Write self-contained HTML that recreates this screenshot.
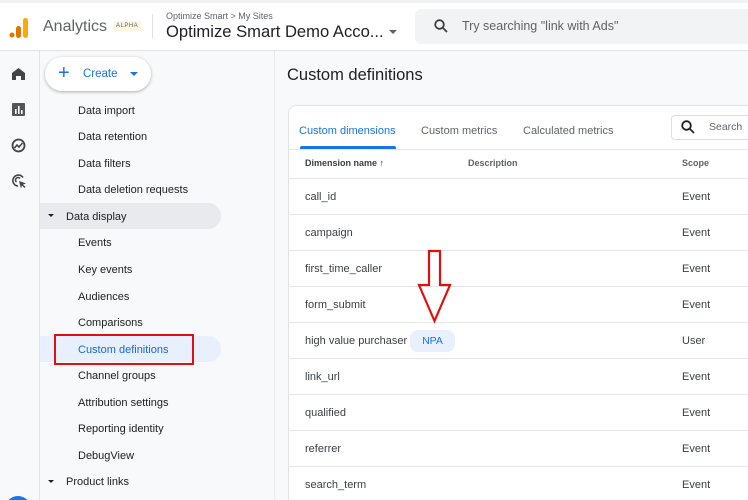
<!DOCTYPE html>
<html><head><style>
*{margin:0;padding:0;box-sizing:border-box}
html,body{width:748px;height:500px;overflow:hidden}
body{background:#f8f9fa;font-family:"Liberation Sans",Arial,sans-serif;position:relative;color:#202124}
.a{position:absolute}
.hdr{left:0;top:0;width:748px;height:51px;background:#fff;border-bottom:1px solid #e3e3e3;border-top:3px solid #f1f1f1}
.rail{left:0;top:51px;width:40px;height:449px;background:#f8f9fa;border-right:1px solid #e3e3e3}
.side{left:40px;top:51px;width:235px;height:449px;background:#f8f9fa;border-right:1px solid #e8e8e8}
.it{position:absolute;left:78px;font-size:11px;color:#202124;line-height:14px}
.card{left:288px;top:105px;width:470px;height:420px;background:#fff;border:1px solid #e3e3e3;border-radius:8px}
.row{position:absolute;left:288px;width:460px;border-top:1px solid #e6e6e6}
.cell{position:absolute;font-size:11px;color:#3c4043}
</style></head><body>
<div class="a hdr"></div>
<svg class="a" style="left:9px;top:17px" width="22" height="22"><circle cx="3" cy="18" r="2.5" fill="#e37400"/><rect x="7" y="9" width="5" height="12" rx="2.5" fill="#e37400"/><rect x="14" y="1" width="5" height="20" rx="2.5" fill="#f9ab00"/></svg>
<div class="a" style="left:43px;top:18px;font-size:16px;color:#5f6368">Analytics</div>
<div class="a" style="left:113px;top:21px;font-size:6px;background:#fef7e0;color:#5f6368;padding:2px 3px;letter-spacing:.5px">ALPHA</div>
<div class="a" style="left:152px;top:14px;width:1px;height:24px;background:#e0e0e0"></div>
<div class="a" style="left:166px;top:11px;font-size:9px;color:#5f6368">Optimize Smart &gt; My Sites</div>
<div class="a" style="left:166px;top:22px;font-size:16.6px;color:#202124">Optimize Smart Demo Acco...</div>
<div class="a" style="left:389px;top:30px;width:0;height:0;border-left:4px solid transparent;border-right:4px solid transparent;border-top:4px solid #5f6368"></div>
<div class="a" style="left:415px;top:9px;width:340px;height:35px;background:#f1f3f4;border-radius:6px"></div>
<svg class="a" style="left:434px;top:19px" width="14" height="14"><circle cx="5.5" cy="5.5" r="4.3" fill="none" stroke="#3c4043" stroke-width="1.8"/><line x1="8.5" y1="8.5" x2="13" y2="13" stroke="#3c4043" stroke-width="1.8"/></svg>
<div class="a" style="left:462px;top:19px;font-size:12.5px;color:#5f6368">Try searching "link with Ads"</div>
<div class="a rail"></div>
<svg class="a" style="left:11px;top:67px" width="15" height="14"><path d="M1 6 L7.5 1 L14 6 V13 H10 V9 H5 V13 H1Z" fill="#444"/></svg>
<svg class="a" style="left:12px;top:103px" width="13" height="13"><rect width="13" height="13" rx="1" fill="#555"/><rect x="3" y="6" width="1.6" height="5" fill="#fff"/><rect x="6" y="3" width="1.6" height="8" fill="#fff"/><rect x="9" y="7" width="1.6" height="4" fill="#fff"/></svg>
<svg class="a" style="left:11px;top:138px" width="15" height="15"><circle cx="7.5" cy="7.5" r="6" fill="none" stroke="#444" stroke-width="1.8"/><path d="M3.5 10 L6 7 L8 9 L11.5 5" fill="none" stroke="#444" stroke-width="1.6"/></svg>
<svg class="a" style="left:11px;top:173px" width="16" height="16"><path d="M12 4.5 A5.5 5.5 0 1 0 7 13" fill="none" stroke="#444" stroke-width="1.6"/><path d="M9 5.5 A2.5 2.5 0 1 0 5.5 9" fill="none" stroke="#444" stroke-width="1.5"/><path d="M8 8 L15 10.5 L12 11.5 L14.5 14 L13.5 15 L11 12.5 L10 15.5Z" fill="#444"/></svg>
<div class="a" style="left:5px;top:496px;width:26px;height:26px;border-radius:50%;background:#1a73e8"></div>
<div class="a side"></div>
<div class="a" style="left:45px;top:57px;width:106px;height:34px;background:#fff;border-radius:17px;box-shadow:0 1px 3px rgba(0,0,0,.3)"></div>
<div class="a" style="left:58px;top:63px;font-size:20px;color:#1a73e8;line-height:20px">+</div>
<div class="a" style="left:83px;top:68px;font-size:11.5px;color:#1a73e8">Create</div>
<div class="a" style="left:130px;top:72px;border-left:4px solid transparent;border-right:4px solid transparent;border-top:4px solid #1a73e8"></div>
<div class="a" style="left:40px;top:203px;width:181px;height:26px;background:#e8eaed;border-radius:0 13px 13px 0"></div>
<div class="a" style="left:40px;top:336px;width:181px;height:26px;background:#e8f0fe;border-radius:0 13px 13px 0"></div>
<div class="a" style="left:54px;top:334px;width:140px;height:31px;border:2px solid #e01010"></div>
<div class="it" style="top:104px">Data import</div>
<div class="it" style="top:130px">Data retention</div>
<div class="it" style="top:157px">Data filters</div>
<div class="it" style="top:183px">Data deletion requests</div>
<div class="a" style="left:48px;top:214px;border-left:3px solid transparent;border-right:3px solid transparent;border-top:3px solid #202124"></div>
<div class="it" style="top:210px;left:66px">Data display</div>
<div class="it" style="top:236px">Events</div>
<div class="it" style="top:263px">Key events</div>
<div class="it" style="top:290px">Audiences</div>
<div class="it" style="top:316px">Comparisons</div>
<div class="it" style="top:343px;color:#1967d2">Custom definitions</div>
<div class="it" style="top:369px">Channel groups</div>
<div class="it" style="top:396px">Attribution settings</div>
<div class="it" style="top:422px">Reporting identity</div>
<div class="it" style="top:449px">DebugView</div>
<div class="a" style="left:48px;top:480px;border-left:3px solid transparent;border-right:3px solid transparent;border-top:3px solid #202124"></div>
<div class="it" style="top:475px;left:66px">Product links</div>
<div class="a" style="left:287px;top:66px;font-size:16.5px;color:#202124">Custom definitions</div>
<div class="a card"></div>
<div class="a" style="left:299px;top:125px;font-size:11px;color:#1a73e8">Custom dimensions</div>
<div class="a" style="left:300px;top:146px;width:96px;height:3px;background:#1a73e8;border-radius:2px 2px 0 0"></div>
<div class="a" style="left:421px;top:125px;font-size:11px;color:#5f6368">Custom metrics</div>
<div class="a" style="left:523px;top:125px;font-size:11px;color:#5f6368">Calculated metrics</div>
<div class="a" style="left:671px;top:115px;width:90px;height:25px;border:1px solid #dadce0;border-radius:4px;background:#fff"></div>
<svg class="a" style="left:681px;top:120px" width="14" height="14"><circle cx="5.5" cy="5.5" r="4.3" fill="none" stroke="#202124" stroke-width="1.8"/><line x1="8.5" y1="8.5" x2="13" y2="13" stroke="#202124" stroke-width="1.8"/></svg>
<div class="a" style="left:709px;top:121px;font-size:10.5px;color:#5f6368">Search</div>
<div class="row" style="top:149px"></div>
<div class="cell" style="left:305px;top:158px;font-size:9px;font-weight:bold;color:#3c4043">Dimension name ↑</div>
<div class="cell" style="left:468px;top:158px;font-size:9px;font-weight:bold;color:#5f6368">Description</div>
<div class="cell" style="left:682px;top:158px;font-size:9px;font-weight:bold;color:#5f6368">Scope</div>
<div class="row" style="top:178px"></div><div class="cell" style="left:305px;top:191px">call_id</div><div class="cell" style="left:682px;top:191px">Event</div>
<div class="row" style="top:214px"></div><div class="cell" style="left:305px;top:227px">campaign</div><div class="cell" style="left:682px;top:227px">Event</div>
<div class="row" style="top:250px"></div><div class="cell" style="left:305px;top:263px">first_time_caller</div><div class="cell" style="left:682px;top:263px">Event</div>
<div class="row" style="top:286px"></div><div class="cell" style="left:305px;top:299px">form_submit</div><div class="cell" style="left:682px;top:299px">Event</div>
<div class="row" style="top:322px"></div><div class="cell" style="left:305px;top:335px">high value purchaser</div><div class="cell" style="left:682px;top:335px">User</div>
<div class="a" style="left:410px;top:330px;width:45px;height:22px;background:#e8f0fe;border-radius:8px;font-size:10.5px;color:#1a73e8;text-align:center;line-height:22px">NPA</div>
<div class="row" style="top:358px"></div><div class="cell" style="left:305px;top:371px">link_url</div><div class="cell" style="left:682px;top:371px">Event</div>
<div class="row" style="top:394px"></div><div class="cell" style="left:305px;top:407px">qualified</div><div class="cell" style="left:682px;top:407px">Event</div>
<div class="row" style="top:430px"></div><div class="cell" style="left:305px;top:443px">referrer</div><div class="cell" style="left:682px;top:443px">Event</div>
<div class="row" style="top:466px"></div><div class="cell" style="left:305px;top:479px">search_term</div><div class="cell" style="left:682px;top:479px">Event</div>
<svg class="a" style="left:416px;top:249px" width="38" height="75"><path d="M13 2 H24 V36 H34 L18.5 72 L3 36 H13 Z" fill="none" stroke="#e01010" stroke-width="2.2"/></svg>
</body></html>
